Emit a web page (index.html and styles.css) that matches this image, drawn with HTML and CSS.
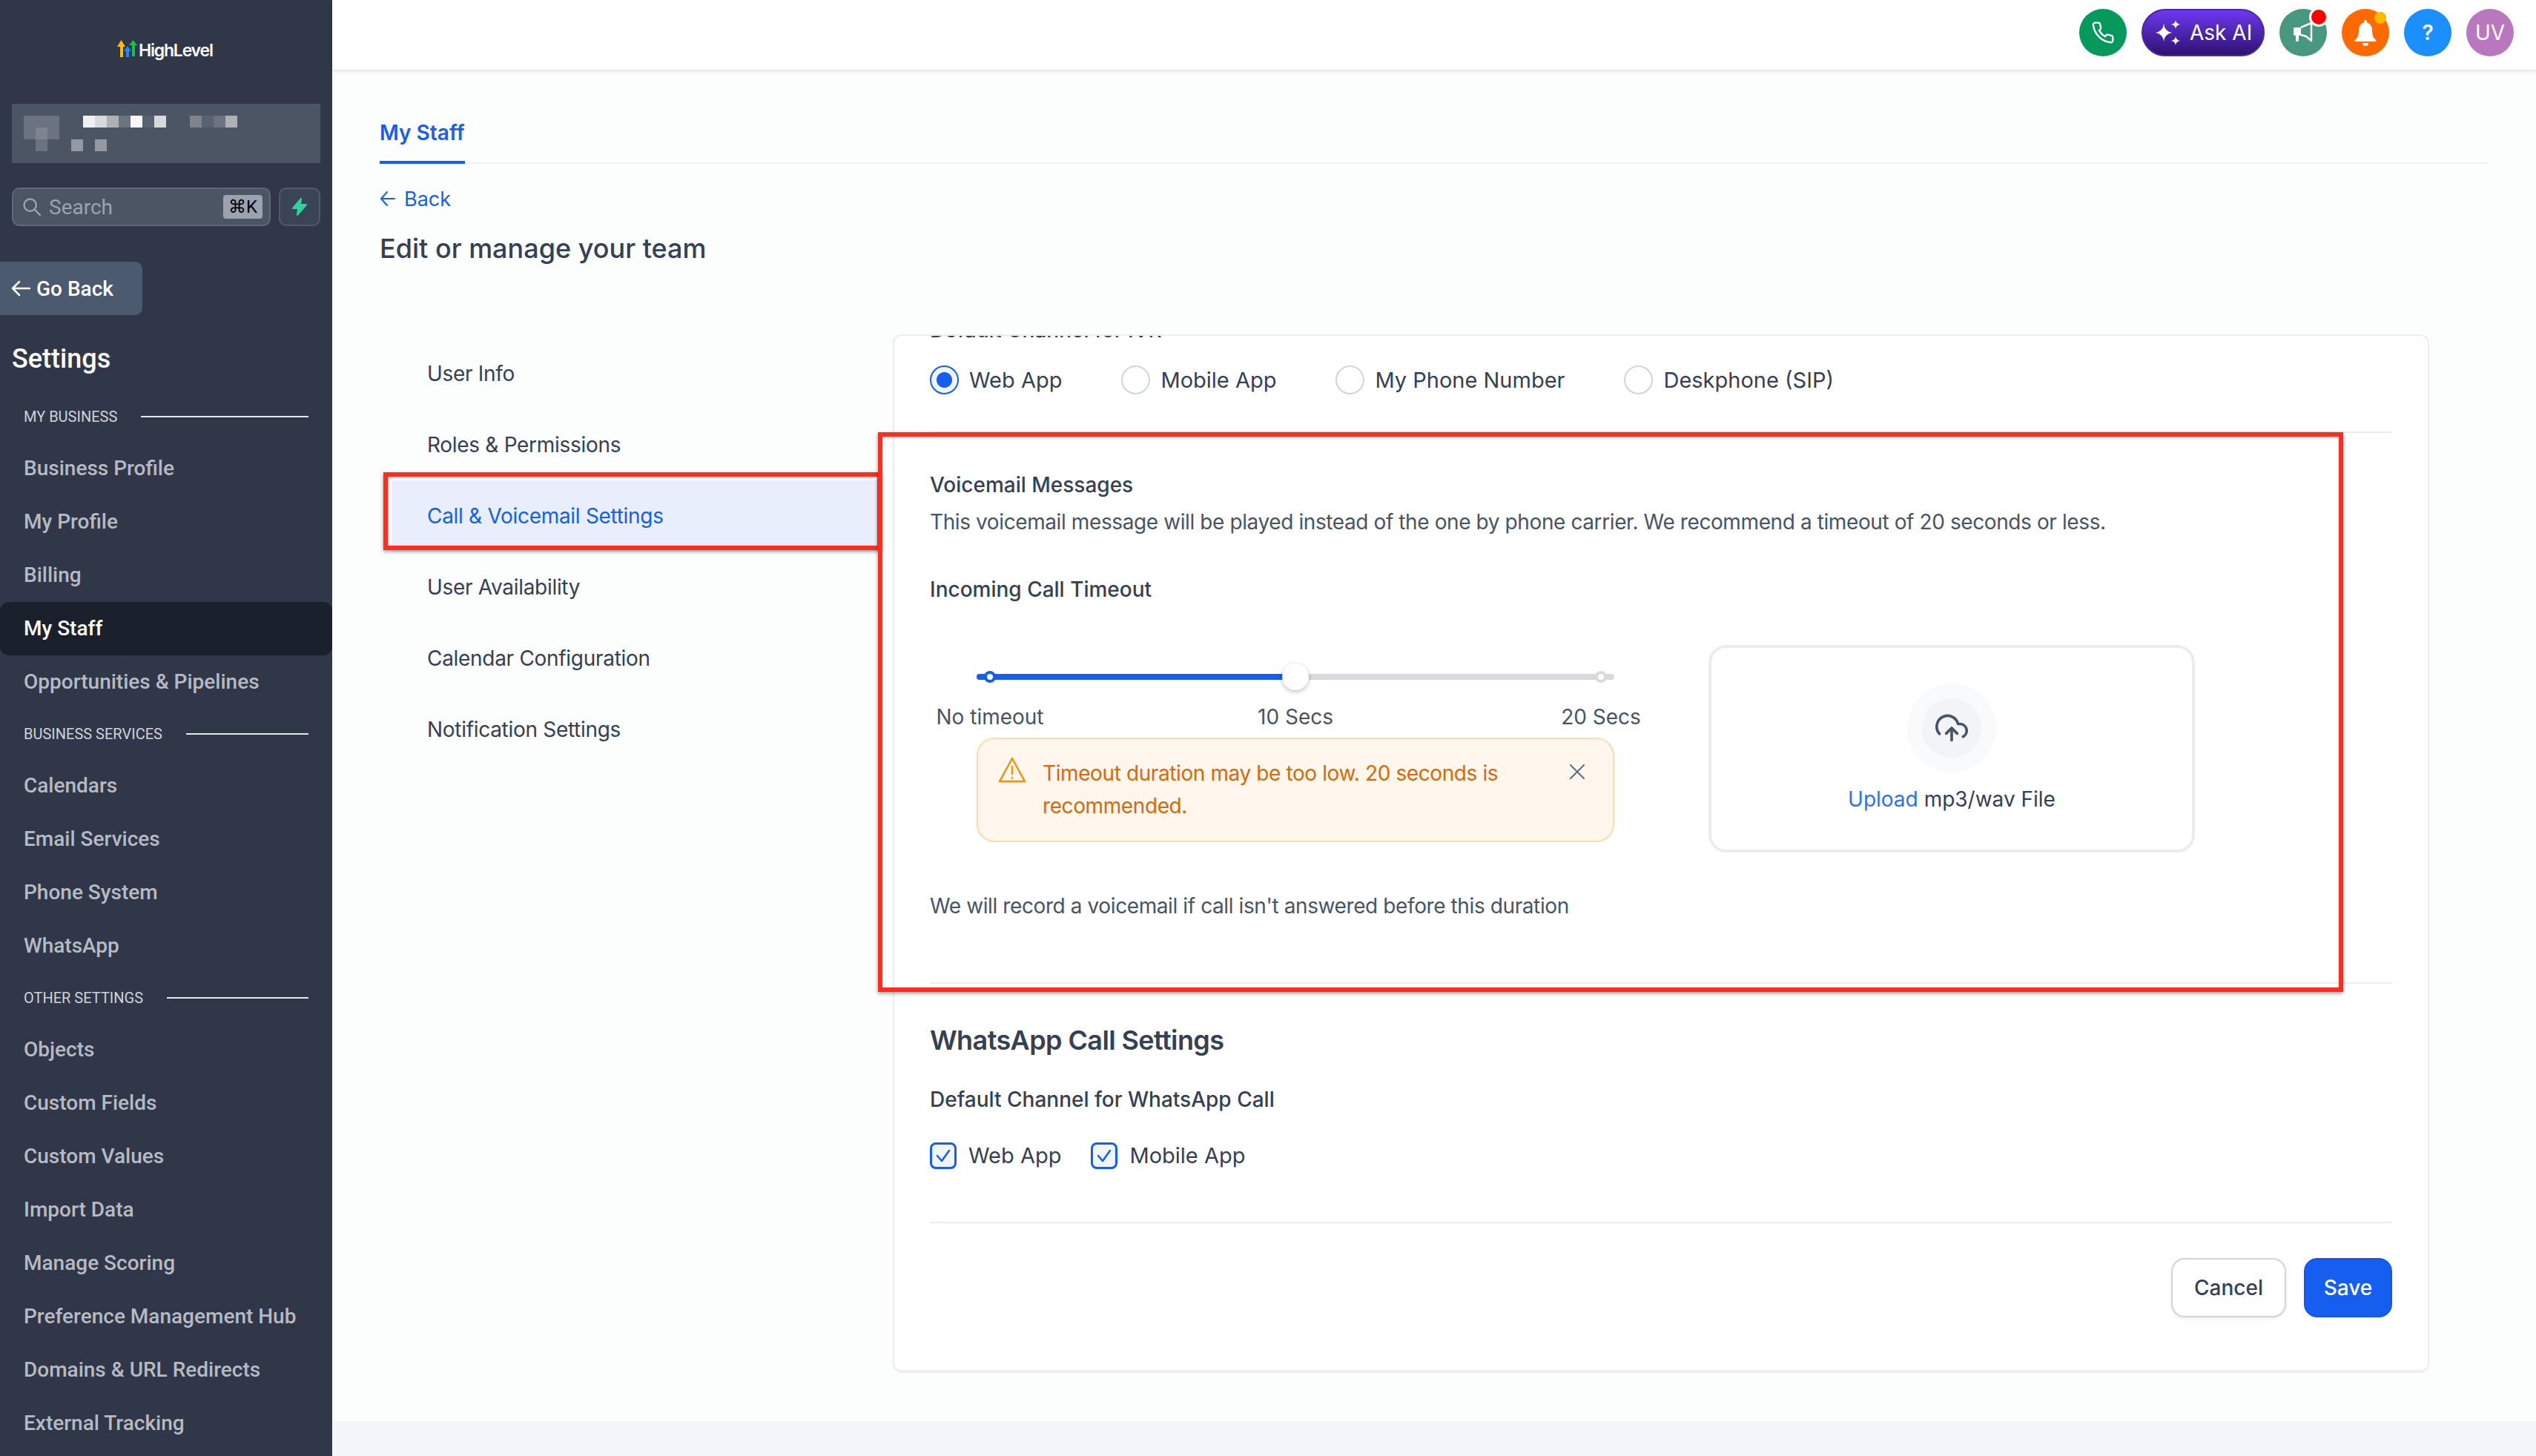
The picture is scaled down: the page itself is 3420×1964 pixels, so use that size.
FILE: index.html
```html
<!DOCTYPE html>
<html lang="en">
<head>
    <meta charset="UTF-8">
    <meta name="viewport" content="width=device-width, initial-scale=1.0">
    <title>My Staff - Call &amp; Voicemail Settings</title>
    <link rel="stylesheet" href="styles.css">
</head>
<body>

    <!-- Sidebar -->
    <aside class="sidebar">
        <div class="logo">
            <svg class="logo-mark" width="30" height="26" viewBox="0 0 30 26">
                <path d="M1 10 6.500 1 12 10H9V24H5V10Z" fill="#fbbc05"/>
                <path d="M10 16 15 9 20 16H17V24H13V16Z" fill="#1e88f5"/>
                <path d="M17 8 22.500 1 28 8H25V23H21V8Z" fill="#18c24a"/>
            </svg>
            <span class="logo-text">HighLevel</span>
        </div>

        <!-- Blurred account name -->
        <div class="account">
            <div class="blur-row">
                <i class="s2"></i><i class="s2"></i><i class="s2"></i><i></i><i></i>
                <i class="s6"></i><i class="s5"></i><i class="s4"></i><i class="s2"></i><i class="s7"></i><i class="s1"></i><i class="s5"></i>
                <i></i><i></i>
                <i class="s3"></i><i class="s1"></i><i class="s2"></i><i class="s4"></i>
            </div>
            <div class="blur-row">
                <i class="s2"></i><i class="s3"></i><i class="s2"></i>
            </div>
            <div class="blur-row">
                <i></i><i class="s2"></i><i></i><i></i><i class="s3b"></i><i></i><i class="s3b"></i>
            </div>
        </div>

        <div class="search-row">
            <div class="search">
                <svg width="28" height="28" viewBox="0 0 24 24" fill="none" stroke="#9ca3af" stroke-width="2" stroke-linecap="round"><circle cx="10" cy="10" r="7"/><path d="m15.500 15.500 6 6"/></svg>
                <span class="search-text">Search</span>
                <span class="kbd">⌘K</span>
            </div>
            <div class="bolt">
                <svg width="24" height="26" viewBox="0 0 24 26"><path d="M14 2 3 15h7l-1 9 12-14h-8z" fill="#2dd4a0" stroke="#2dd4a0" stroke-width="2" stroke-linejoin="round"/></svg>
            </div>
        </div>

        <div class="go-back">
            <svg width="26" height="24" viewBox="0 0 26 24" fill="none" stroke="#fff" stroke-width="2.500" stroke-linecap="round" stroke-linejoin="round"><path d="M25 12H2M11 3l-9 9 9 9"/></svg>
            <span>Go Back</span>
        </div>

        <h2 class="side-title">Settings</h2>

        <div class="side-label"><span>MY BUSINESS</span></div>
        <a class="side-item">Business Profile</a>
        <a class="side-item">My Profile</a>
        <a class="side-item">Billing</a>
        <a class="side-item active">My Staff</a>
        <a class="side-item">Opportunities &amp; Pipelines</a>

        <div class="side-label"><span>BUSINESS SERVICES</span></div>
        <a class="side-item">Calendars</a>
        <a class="side-item">Email Services</a>
        <a class="side-item">Phone System</a>
        <a class="side-item">WhatsApp</a>

        <div class="side-label"><span>OTHER SETTINGS</span></div>
        <a class="side-item">Objects</a>
        <a class="side-item">Custom Fields</a>
        <a class="side-item">Custom Values</a>
        <a class="side-item">Import Data</a>
        <a class="side-item">Manage Scoring</a>
        <a class="side-item">Preference Management Hub</a>
        <a class="side-item">Domains &amp; URL Redirects</a>
        <a class="side-item">External Tracking</a>
    </aside>

    <div class="main">
        <!-- Top bar -->
        <header class="topbar">
            <div class="top-btn green">
                <svg width="32" height="32" viewBox="0 0 24 24" fill="none" stroke="#fff" stroke-width="1.800" stroke-linejoin="round"><path d="M22 16.920v3a2 2 0 0 1-2.180 2 19.790 19.790 0 0 1-8.630-3.070 19.500 19.500 0 0 1-6-6 19.790 19.790 0 0 1-3.070-8.670A2 2 0 0 1 4.110 2h3a2 2 0 0 1 2 1.720c.13.96.36 1.900.7 2.810a2 2 0 0 1-.45 2.110L8.090 9.910a16 16 0 0 0 6 6l1.270-1.270a2 2 0 0 1 2.110-.45c.91.34 1.850.57 2.810.7A2 2 0 0 1 22 16.920z"/></svg>
            </div>
            <div class="ask-ai">
                <svg width="36" height="36" viewBox="0 0 36 36" fill="#fff">
                    <path d="M12 6Q13 16 23 18 13 20 12 30 11 20 1 18 11 16 12 6Z"/>
                    <path d="M28 1Q28.500 6 34 7 28.500 8 28 13 27.500 8 22 7 27.500 6 28 1Z"/>
                    <path d="M28 23Q28.500 28 34 29 28.500 30 28 35 27.500 30 22 29 27.500 28 28 23Z"/>
                </svg>
                <span>Ask AI</span>
            </div>
            <div class="top-btn teal">
                <svg width="30" height="30" viewBox="0 0 30 30">
                    <path d="M2 10a2 2 0 0 1 2-2h8v11H9v7a1 1 0 0 1-1 1H6a1 1 0 0 1-1-1v-7H4a2 2 0 0 1-2-2z" fill="#fff"/>
                    <path d="M12 8 26 2v24l-7-6-7-2" fill="none" stroke="#fff" stroke-width="2.500" stroke-linejoin="round"/>
                </svg>
                <span class="dot-red"></span>
            </div>
            <div class="top-btn orange">
                <svg width="32" height="36" viewBox="0 0 32 36" fill="#fff">
                    <path d="M16 1a2 2 0 0 1 2 2v1.500C23 6 25 10 25 15c0 6 1 9 5 13 1 1 .5 2-1 2H3c-1.500 0-2-1-1-2 4-4 5-7 5-13 0-5 2-9 7-10.500V3a2 2 0 0 1 2-2z"/>
                    <path d="M12 32h8a4 4 0 0 1-8 0z"/>
                </svg>
                <span class="dot-amber"></span>
            </div>
            <div class="top-btn blue">?</div>
            <div class="top-btn purple">UV</div>
        </header>

        <div class="content">
            <div class="tabs"><span class="tab">My Staff</span></div>

            <a class="back">
                <svg width="22" height="24" viewBox="0 0 22 24" fill="none" stroke="#155eef" stroke-width="2" stroke-linecap="round" stroke-linejoin="round"><path d="M20 12H2M10 3l-8 9 8 9"/></svg>
                <span>Back</span>
            </a>

            <h1 class="page-title">Edit or manage your team</h1>

            <div class="panels">
                <nav class="side-menu">
                    <a class="menu-item">User Info</a>
                    <a class="menu-item">Roles &amp; Permissions</a>
                    <a class="menu-item selected">Call &amp; Voicemail Settings</a>
                    <a class="menu-item">User Availability</a>
                    <a class="menu-item">Calendar Configuration</a>
                    <a class="menu-item">Notification Settings</a>
                </nav>

                <section class="card">
                    <div class="clipped-label">Default Channel for IVR</div>

                    <div class="radio-row">
                        <label class="radio checked"><span class="radio-dot"></span>Web App</label>
                        <label class="radio"><span class="radio-dot"></span>Mobile App</label>
                        <label class="radio"><span class="radio-dot"></span>My Phone Number</label>
                        <label class="radio"><span class="radio-dot"></span>Deskphone (SIP)</label>
                    </div>

                    <h3 class="field-title first">Voicemail Messages</h3>
                    <p class="field-text">This voicemail message will be played instead of the one by phone carrier. We recommend a timeout of 20 seconds or less.</p>
                    <h3 class="field-title timeout">Incoming Call Timeout</h3>

                    <div class="timeout-row">
                        <div class="timeout-col">
                            <div class="slider">
                                <div class="rail">
                                    <div class="rail-fill"></div>
                                    <span class="mark mark-start"></span>
                                    <span class="mark mark-end"></span>
                                    <span class="handle"></span>
                                </div>
                            </div>
                            <div class="slider-labels">
                                <span>No timeout</span>
                                <span>10 Secs</span>
                                <span>20 Secs</span>
                            </div>
                            <div class="alert">
                                <svg class="alert-icon" width="38" height="36" viewBox="0 0 38 36" fill="none" stroke="#f79009" stroke-width="2.500" stroke-linejoin="round" stroke-linecap="round"><path d="M19 2 2 33h34Z"/><path d="M19 13v10M19 28v.5"/></svg>
                                <div class="alert-text">Timeout duration may be too low. 20 seconds is recommended.</div>
                                <svg class="alert-close" width="24" height="24" viewBox="0 0 24 24" fill="none" stroke="#667085" stroke-width="2.200" stroke-linecap="round"><path d="M3 3l18 18M21 3 3 21"/></svg>
                            </div>
                            <p class="field-text note">We will record a voicemail if call isn't answered before this duration</p>
                        </div>

                        <div class="upload">
                            <div class="upload-ring">
                                <div class="upload-inner">
                                    <svg width="44" height="44" viewBox="0 0 24 24" fill="none" stroke="#475467" stroke-width="2" stroke-linecap="round" stroke-linejoin="round"><path d="M16 16l-4-4-4 4M12 12v9"/><path d="M20.390 18.390A5 5 0 0 0 18 9h-1.260A8 8 0 1 0 3 16.300"/></svg>
                                </div>
                            </div>
                            <div class="upload-text"><span class="upload-link">Upload</span> mp3/wav File</div>
                        </div>
                    </div>

                    <hr class="rule rule-top">

                    <h2 class="section-title">WhatsApp Call Settings</h2>
                    <h3 class="field-title channel">Default Channel for WhatsApp Call</h3>

                    <div class="check-row">
                        <label class="check">
                            <span class="check-box"><svg width="26" height="26" viewBox="0 0 26 26" fill="none" stroke="#155eef" stroke-width="2.500" stroke-linecap="round" stroke-linejoin="round"><path d="m5 13 6 7L21 6"/></svg></span>
                            Web App
                        </label>
                        <label class="check">
                            <span class="check-box"><svg width="26" height="26" viewBox="0 0 26 26" fill="none" stroke="#155eef" stroke-width="2.500" stroke-linecap="round" stroke-linejoin="round"><path d="m5 13 6 7L21 6"/></svg></span>
                            Mobile App
                        </label>
                    </div>

                    <hr class="rule rule-bottom">

                    <div class="actions">
                        <button class="btn btn-cancel">Cancel</button>
                        <button class="btn btn-save">Save</button>
                    </div>
                </section>
            </div>
        </div>

        <div class="footer-strip"></div>
    </div>

    <!-- Red annotation boxes drawn over the screenshot -->
    <div class="annotation note-menu"></div>
    <div class="annotation note-voicemail"></div>

</body>
</html>
```

FILE: styles.css
```css
* {
    box-sizing: border-box;
}
body {
    margin: 0;
    height: 1964px;
    display: flex;
    overflow: hidden;
    position: relative;
    font-family: Inter, "Liberation Sans", sans-serif;
    font-size: 28px;
    color: #344054;
    background-color: #fcfdfd;
}

/* Sidebar */
.sidebar {
    width: 448px;
    height: 1964px;
    flex: none;
    overflow: hidden;
    padding-top: 53px;
    background-color: #2f3748;
    font-family: Roboto, "Liberation Sans", sans-serif;
}
.logo {
    height: 30px;
    margin-left: 157px;
    display: flex;
    align-items: flex-start;
}
.logo-text {
    font-family: Inter, sans-serif;
    font-size: 23px;
    line-height: 30px;
    font-weight: 600;
    letter-spacing: -1.2px;
    color: #fff;
}
.account {
    width: 416px;
    height: 80px;
    margin: 57px 0 0 16px;
    padding: 16px;
    background-color: #4b5563;
}
.blur-row {
    display: flex;
    height: 16px;
}
.blur-row i {
    width: 16px;
    height: 16px;
}
.s1 { background-color: #586271; }
.s2 { background-color: #6b7280; }
.s3 { background-color: #7f848c; }
.s3b { background-color: #949aa2; }
.s4 { background-color: #aeb0b4; }
.s5 { background-color: #d8d9db; }
.s6 { background-color: #f0f0f0; }
.s7 { background-color: #f8f8f8; }

.search-row {
    display: flex;
    gap: 11px;
    margin: 33px 16px 0;
}
.search {
    width: 349px;
    height: 52px;
    display: flex;
    align-items: center;
    padding: 0 9px 0 11px;
    background-color: #4b5563;
    border: 2px solid #5f6878;
    border-radius: 10px;
}
.search-text {
    flex: 1;
    margin-left: 9px;
    color: #9ca3af;
}
.kbd {
    width: 53px;
    height: 32px;
    border-radius: 4px;
    text-align: center;
    font-size: 24px;
    line-height: 32px;
    color: #000;
    background-color: #9ca3af;
}
.bolt {
    width: 56px;
    height: 52px;
    display: flex;
    align-items: center;
    justify-content: center;
    background-color: #3b4454;
    border: 2px solid #515a6a;
    border-radius: 10px;
}
.go-back {
    width: 192px;
    height: 72px;
    margin-top: 48px;
    padding-left: 15px;
    display: flex;
    align-items: center;
    gap: 8px;
    font-weight: 500;
    color: #fff;
    background-color: #4b5a6e;
    border-radius: 0 10px 10px 0;
}
.side-title {
    margin: 37px 0 42px 16px;
    font-size: 36px;
    line-height: 44px;
    font-weight: 500;
    color: #fff;
}
.side-label {
    height: 28px;
    margin: 20px 32px;
    display: flex;
    align-items: center;
    gap: 32px;
    font-size: 20px;
    line-height: 28px;
    color: #cfd3d9;
}
.side-label::after {
    content: "";
    flex: 1;
    height: 2px;
    background-color: #e5e7eb;
}
.side-item {
    display: block;
    height: 72px;
    padding-left: 32px;
    font-weight: 500;
    line-height: 72px;
    color: #b6bac3;
}
.side-item.active {
    color: #fff;
    background-color: #1a202c;
    border-radius: 12px;
}

/* Top bar */
.main {
    flex: 1;
    min-width: 0;
    display: flex;
    flex-direction: column;
}
.topbar {
    height: 94px;
    flex: none;
    display: flex;
    justify-content: flex-end;
    align-items: center;
    gap: 20px;
    padding: 0 30px 6px 0;
    background-color: #fff;
    box-shadow: 0 2px 5px rgba(0, 0, 0, 0.12);
}
.top-btn {
    position: relative;
    width: 64px;
    height: 64px;
    border-radius: 50%;
    display: flex;
    align-items: center;
    justify-content: center;
    color: #fff;
}
.green { background-color: #059a5b; }
.teal { background-color: #47987f; }
.orange { background-color: #ff6a00; }
.blue {
    background-color: #1b8ffb;
    font-weight: 600;
}
.purple { background-color: #b977bd; }
.ask-ai {
    width: 166px;
    height: 64px;
    display: flex;
    align-items: center;
    gap: 11px;
    padding-left: 16px;
    color: #fff;
    background: linear-gradient(#6d38f0, #2f1270);
    border: 2px solid #4a26a0;
    border-radius: 32px;
}
.dot-red {
    position: absolute;
    top: -2px;
    right: -2px;
    width: 26px;
    height: 26px;
    background-color: #f00;
    border: 3px solid #fff;
    border-radius: 50%;
}
.dot-amber {
    position: absolute;
    top: 4px;
    right: 4px;
    width: 16px;
    height: 16px;
    background-color: #ffb800;
    border-radius: 50%;
}

/* Page content */
.content {
    flex: 1;
    padding: 65px 66px 0 64px;
}
.tabs {
    border-bottom: 2px solid #f0f1f4;
    height: 62px;
}
.tab {
    display: inline-block;
    height: 62px;
    padding-bottom: 19px;
    line-height: 40px;
    font-weight: 600;
    color: #155eef;
    border-bottom: 4px solid #155eef;
}
.back {
    display: flex;
    align-items: center;
    gap: 11px;
    height: 40px;
    margin-top: 27px;
    font-size: 27px;
    color: #155eef;
}
.page-title {
    margin: 23px 0 0;
    font-size: 36px;
    line-height: 48px;
    font-weight: 500;
}
.panels {
    display: flex;
    gap: 16px;
    margin-top: 92px;
}
.side-menu {
    width: 660px;
    margin-left: 16px;
    padding-top: 5px;
}
.menu-item {
    display: block;
    height: 96px;
    padding-left: 48px;
    line-height: 96px;
    letter-spacing: -0.3px;
}
.selected {
    color: #155eef;
    background-color: #e8eefb;
}
.card {
    width: 2072px;
    height: 1401px;
    overflow: hidden;
    padding: 0 48px;
    background-color: #fff;
    border: 2px solid #eceef2;
    border-bottom-width: 4px;
    border-radius: 12px;
}
.clipped-label {
    margin-top: -28px;
    line-height: 40px;
    font-weight: 500;
}
.radio-row {
    display: flex;
    height: 92px;
    margin-top: 27px;
    border-bottom: 2px solid #eaecf0;
    gap: 80px;
    font-size: 29px;
}
.radio {
    display: flex;
    gap: 14px;
    height: 40px;
    align-items: center;
}
.radio-dot {
    width: 39px;
    height: 39px;
    flex: none;
    border: 2px solid #d0d5dd;
    border-radius: 50%;
    background-color: #fff;
}
.radio.checked .radio-dot {
    border-color: #155eef;
    background: radial-gradient(circle, #155eef 10px, #eff4ff 11px);
}
.field-title {
    margin: 0;
    font-size: 28px;
    line-height: 40px;
    font-weight: 500;
}
.field-title.first {
    margin-top: 50px;
}
.field-title.timeout {
    margin-top: 51px;
}
.field-title.channel {
    margin-top: 36px;
}
.field-text {
    margin: 10px 0 0;
    line-height: 40px;
    letter-spacing: -0.4px;
    color: #475467;
}

/* Timeout slider and upload */
.timeout-row {
    display: flex;
    margin-top: 55px;
}
.timeout-col {
    width: 1050px;
    flex: none;
}
.slider {
    width: 860px;
    height: 77px;
    margin-left: 63px;
    padding-top: 39px;
}
.rail {
    position: relative;
    height: 8px;
    border-radius: 4px;
    background-color: #d9dade;
}
.rail-fill {
    width: 50%;
    height: 8px;
    border-radius: 4px 0 0 4px;
    background-color: #155eef;
}
.mark {
    position: absolute;
    top: -4px;
    width: 16px;
    height: 16px;
    border-radius: 50%;
    background-color: #fff;
}
.mark-start {
    left: 10px;
    border: 4px solid #155eef;
}
.mark-end {
    right: 10px;
    border: 4px solid #d9dade;
}
.handle {
    position: absolute;
    top: -14px;
    left: 412px;
    width: 36px;
    height: 36px;
    border-radius: 50%;
    background-color: #fff;
    box-shadow: 0 2px 6px rgba(0, 0, 0, 0.25);
}
.slider-labels {
    display: grid;
    grid-template-columns: repeat(3, 412px);
    margin-left: -125px;
    line-height: 40px;
    text-align: center;
    color: #475467;
}
.alert {
    width: 860px;
    height: 141px;
    margin: 8px 0 0 63px;
    padding: 24px 36px 0 27px;
    display: flex;
    align-items: flex-start;
    background-color: #fff6ed;
    border: 2px solid #fcdcae;
    border-radius: 24px;
}
.alert-icon {
    flex: none;
    margin-right: 22px;
}
.alert-text {
    width: 640px;
    line-height: 44px;
    letter-spacing: -0.4px;
    color: #dc6803;
}
.alert-close {
    flex: none;
    margin: 8px 0 0 auto;
}
.note {
    margin-top: 66px;
}
.upload {
    width: 656px;
    height: 280px;
    padding-top: 48px;
    background-color: #fff;
    border: 4px solid #eaecf0;
    border-radius: 24px;
}
.upload-ring {
    width: 120px;
    height: 120px;
    margin: 0 auto;
    padding: 20px;
    border-radius: 50%;
    background-color: #f9fafb;
}
.upload-inner {
    width: 80px;
    height: 80px;
    display: flex;
    align-items: center;
    justify-content: center;
    border-radius: 50%;
    background-color: #f2f4f7;
}
.upload-text {
    margin-top: 16px;
    line-height: 40px;
    text-align: center;
}
.upload-link {
    color: #2970ff;
}
.rule {
    margin: 0;
    border: 0;
    height: 2px;
    background-color: #eaecf0;
}
.rule-top {
    margin-top: 83px;
}
.rule-bottom {
    margin-top: 69px;
}
.section-title {
    margin: 52px 0 0;
    font-size: 36px;
    line-height: 48px;
    font-weight: 600;
    letter-spacing: -0.6px;
}
.check-row {
    display: flex;
    gap: 40px;
    margin-top: 36px;
    font-size: 29px;
}
.check {
    display: flex;
    align-items: center;
    gap: 16px;
    line-height: 40px;
}
.check-box {
    width: 36px;
    height: 36px;
    display: flex;
    align-items: center;
    justify-content: center;
    border: 3px solid #155eef;
    border-radius: 8px;
    background-color: #eff4ff;
}
.actions {
    display: flex;
    justify-content: flex-end;
    gap: 24px;
    margin-top: 47px;
}
.btn {
    height: 80px;
    font-family: inherit;
    font-size: 28px;
    font-weight: 500;
    border-radius: 18px;
}
.btn-cancel {
    width: 155px;
    color: #344054;
    background-color: #fff;
    border: 2px solid #d0d5dd;
    box-shadow: 0 2px 4px rgba(16, 24, 40, 0.08);
}
.btn-save {
    width: 119px;
    color: #fff;
    background-color: #155eef;
    border: 2px solid #0f56ec;
}
.footer-strip {
    height: 47px;
    flex: none;
    background-color: #f2f6fa;
}

/* Red annotation boxes */
.annotation {
    position: absolute;
    border: 6px solid #ff2d1f;
    box-shadow: 0 2px 5px rgba(0, 0, 0, 0.4), inset 0 2px 4px rgba(0, 0, 0, 0.15);
}
.note-menu {
    left: 517px;
    top: 637px;
    width: 672px;
    height: 105px;
}
.note-voicemail {
    left: 1184px;
    top: 583px;
    width: 1976px;
    height: 755px;
}
```
